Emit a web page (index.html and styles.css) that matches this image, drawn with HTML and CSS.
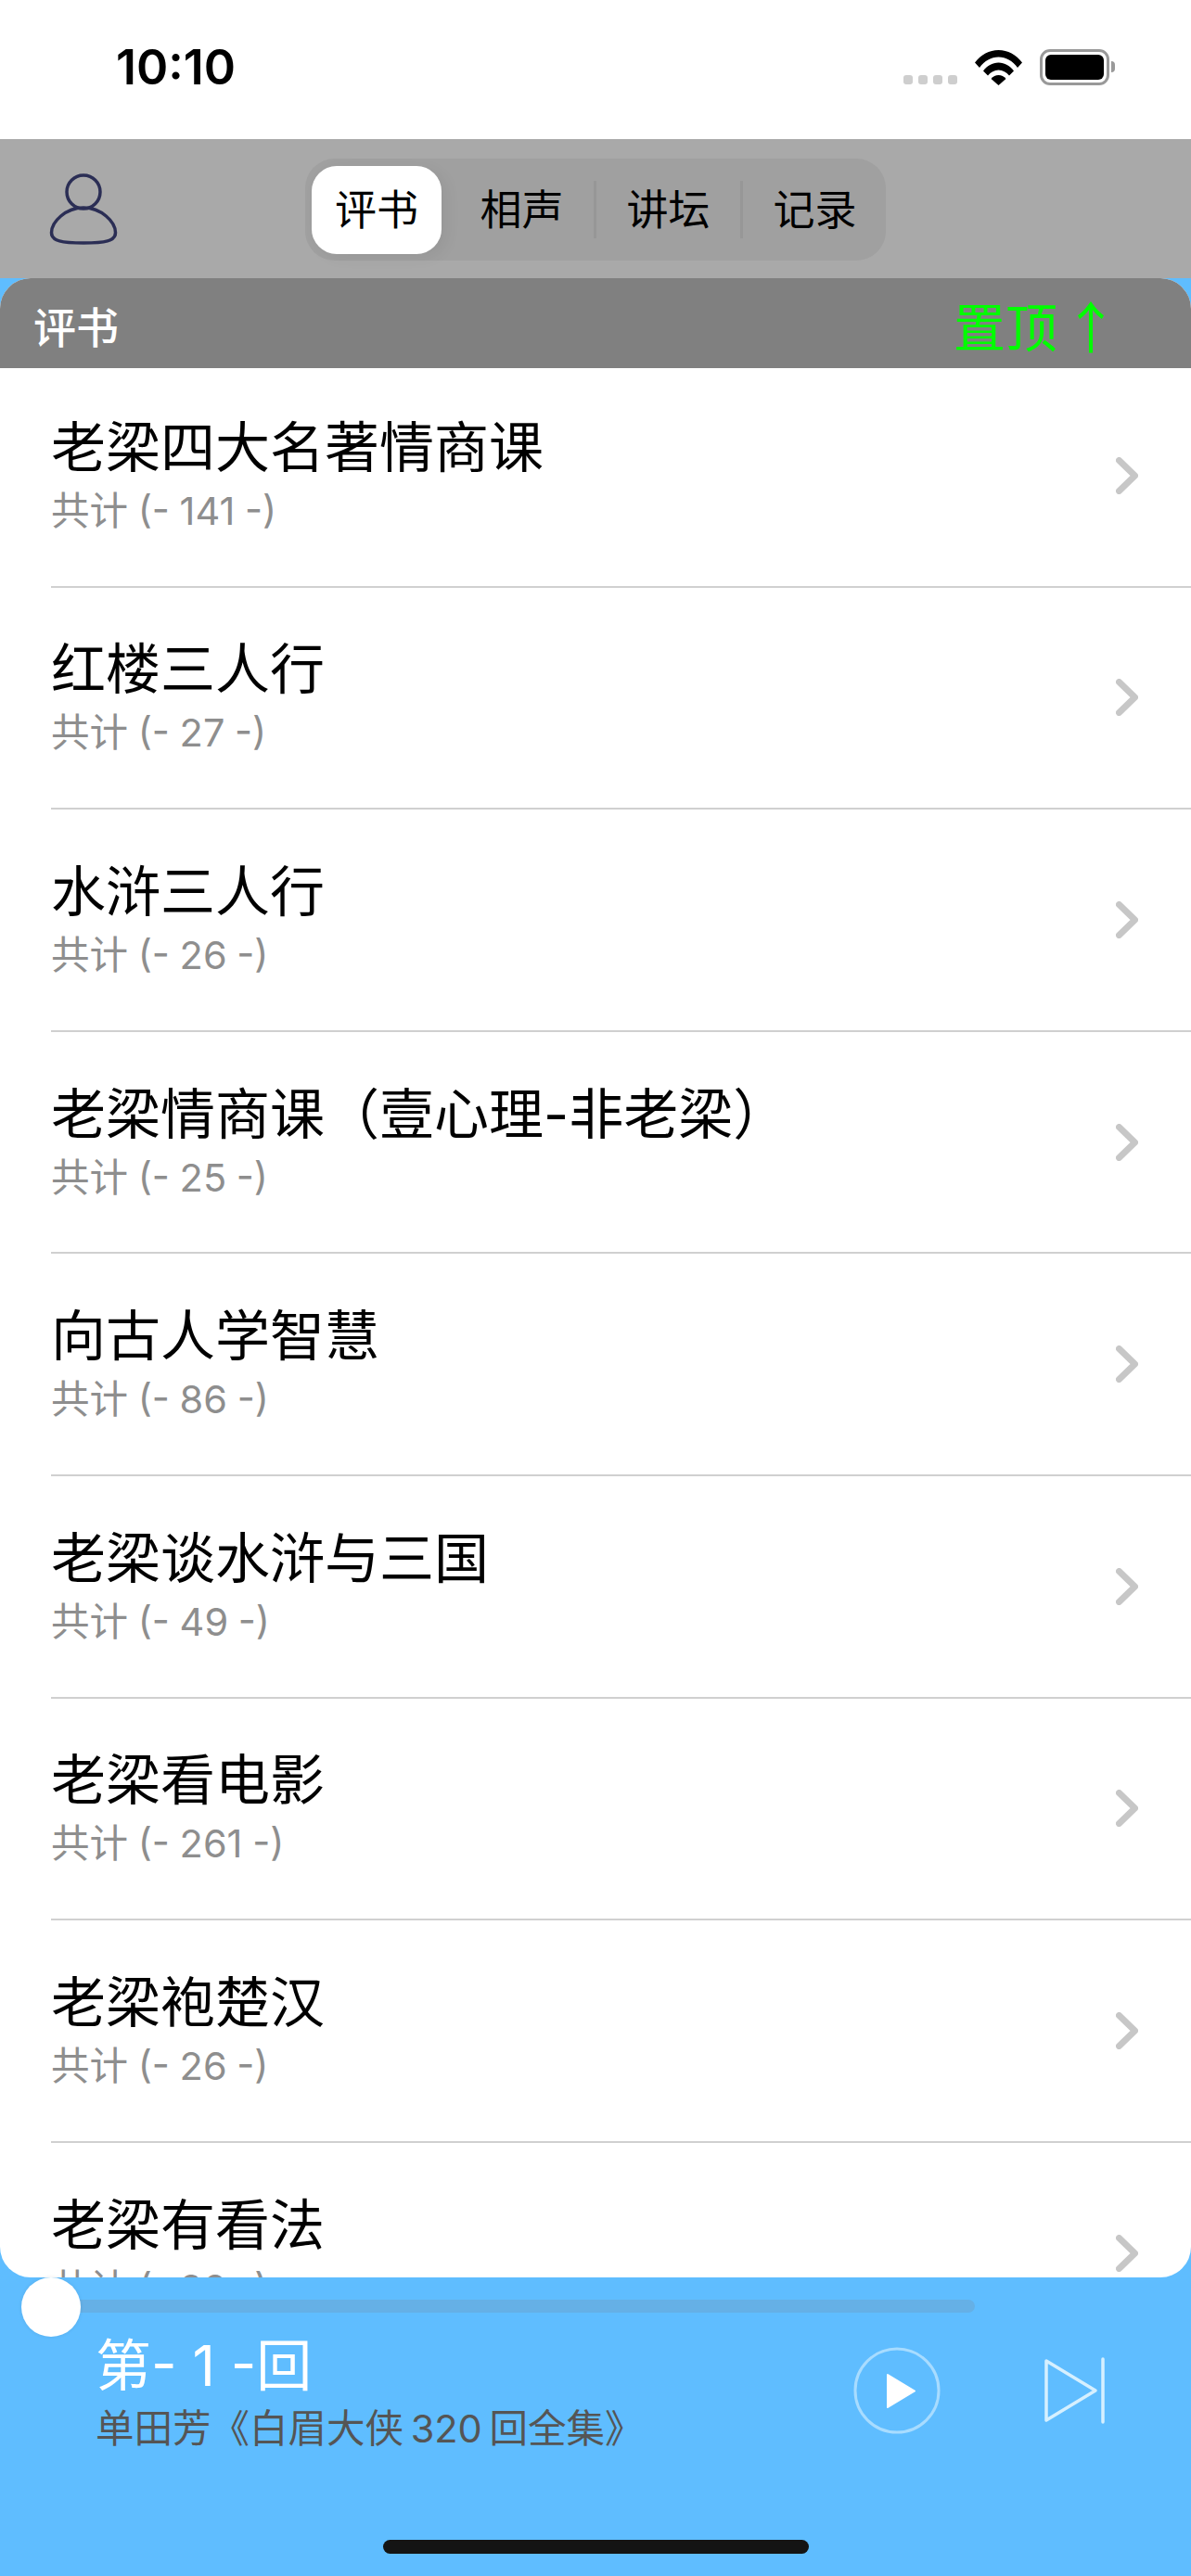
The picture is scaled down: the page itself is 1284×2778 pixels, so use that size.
FILE: index.html
```html
<!DOCTYPE html>
<html lang="zh">
<head>
    <meta charset="utf-8">
    <title>评书</title>
    <link rel="stylesheet" href="styles.css">
</head>
<body>
    <div class="app">
        <!-- Status bar -->
        <div class="status-bar">
            <span class="time">10:10</span>
            <div class="status-icons">
                <div class="signal"><i></i><i></i><i></i><i></i></div>
                <svg class="wifi" width="51" height="38" viewBox="0 0 51 38">
                    <path d="M0 13.5C6.500 5 15.500 0 25.500 0S44.500 5 51 13.500L46 19C40.500 11.500 33.500 7.500 25.500 7.500S10.500 11.500 5 19Z"/>
                    <path d="M9 22.500C13 17 19 13.500 25.500 13.500S38 17 42 22.500L37 27.500C34 24 30 21.500 25.500 21.500S17 24 14 27.500Z"/>
                    <path d="M17.500 31C19.500 28.500 22.500 27 25.500 27S31.500 28.500 33.500 31L25.500 38Z"/>
                </svg>
                <div class="battery"><div class="battery-level"></div></div>
                <div class="battery-nub"></div>
            </div>
        </div>

        <!-- Top nav -->
        <div class="nav">
            <svg class="user-icon" width="76" height="78" viewBox="0 0 76 78" fill="none" stroke="#2b2e55" stroke-width="3.5">
                <circle cx="38" cy="20" r="18"/>
                <path d="M38 37C19 37 3.500 52 3.500 64C3.500 73 15 75 38 75S72.500 73 72.500 64C72.500 52 57 37 38 37Z"/>
            </svg>
            <div class="segments">
                <div class="segment active">评书</div>
                <div class="segment">相声</div>
                <div class="segment-line"></div>
                <div class="segment">讲坛</div>
                <div class="segment-line"></div>
                <div class="segment">记录</div>
            </div>
        </div>

        <!-- List -->
        <div class="main">
            <div class="panel">
                <div class="section-head">
                    <span class="section-title">评书</span>
                    <span class="to-top">置顶<b class="to-top-arrow">↑</b></span>
                </div>
                <div class="list">
                    <div class="row">
                        <div class="row-text"><div class="row-title">老梁四大名著情商课</div><div class="row-sub">共计 (- 141 -)</div></div>
                        <svg class="chevron" width="24" height="40" viewBox="0 0 24 40"><path d="M3.500 3.500L20.500 20L3.500 36.500"/></svg>
                    </div>
                    <div class="row">
                        <div class="row-text"><div class="row-title">红楼三人行</div><div class="row-sub">共计 (- 27 -)</div></div>
                        <svg class="chevron" width="24" height="40" viewBox="0 0 24 40"><path d="M3.500 3.500L20.500 20L3.500 36.500"/></svg>
                    </div>
                    <div class="row">
                        <div class="row-text"><div class="row-title">水浒三人行</div><div class="row-sub">共计 (- 26 -)</div></div>
                        <svg class="chevron" width="24" height="40" viewBox="0 0 24 40"><path d="M3.500 3.500L20.500 20L3.500 36.500"/></svg>
                    </div>
                    <div class="row">
                        <div class="row-text"><div class="row-title">老梁情商课（壹心理-非老梁）</div><div class="row-sub">共计 (- 25 -)</div></div>
                        <svg class="chevron" width="24" height="40" viewBox="0 0 24 40"><path d="M3.500 3.500L20.500 20L3.500 36.500"/></svg>
                    </div>
                    <div class="row">
                        <div class="row-text"><div class="row-title">向古人学智慧</div><div class="row-sub">共计 (- 86 -)</div></div>
                        <svg class="chevron" width="24" height="40" viewBox="0 0 24 40"><path d="M3.500 3.500L20.500 20L3.500 36.500"/></svg>
                    </div>
                    <div class="row">
                        <div class="row-text"><div class="row-title">老梁谈水浒与三国</div><div class="row-sub">共计 (- 49 -)</div></div>
                        <svg class="chevron" width="24" height="40" viewBox="0 0 24 40"><path d="M3.500 3.500L20.500 20L3.500 36.500"/></svg>
                    </div>
                    <div class="row">
                        <div class="row-text"><div class="row-title">老梁看电影</div><div class="row-sub">共计 (- 261 -)</div></div>
                        <svg class="chevron" width="24" height="40" viewBox="0 0 24 40"><path d="M3.500 3.500L20.500 20L3.500 36.500"/></svg>
                    </div>
                    <div class="row">
                        <div class="row-text"><div class="row-title">老梁袍楚汉</div><div class="row-sub">共计 (- 26 -)</div></div>
                        <svg class="chevron" width="24" height="40" viewBox="0 0 24 40"><path d="M3.500 3.500L20.500 20L3.500 36.500"/></svg>
                    </div>
                    <div class="row">
                        <div class="row-text"><div class="row-title">老梁有看法</div><div class="row-sub">共计 (- 92 -)</div></div>
                        <svg class="chevron" width="24" height="40" viewBox="0 0 24 40"><path d="M3.500 3.500L20.500 20L3.500 36.500"/></svg>
                    </div>
                </div>
            </div>
        </div>

        <!-- Player -->
        <div class="player">
            <div class="slider">
                <div class="slider-thumb"></div>
            </div>
            <div class="player-body">
                <div class="player-text">
                    <div class="player-title">第- 1 -回</div>
                    <div class="player-sub">单田芳《白眉大侠 320 回全集》</div>
                </div>
                <svg class="play" width="94" height="94" viewBox="0 0 94 94">
                    <circle cx="47" cy="47" r="45" fill="none" stroke="#a8dcff" stroke-width="3"/>
                    <path d="M37 30L66 47.500L37 65Z" fill="#fff" stroke="#fff" stroke-width="2" stroke-linejoin="round"/>
                </svg>
                <svg class="next" width="66" height="72" viewBox="0 0 66 72" fill="none" stroke="#d6f0ff" stroke-width="3.500" stroke-linejoin="round" stroke-linecap="round">
                    <path d="M2 4L55 36L2 68Z"/>
                    <path d="M63 2V70"/>
                </svg>
            </div>
            <div class="home-bar"></div>
        </div>
    </div>
</body>
</html>
```

FILE: styles.css
```css
* {
    box-sizing: border-box;
    margin: 0;
    padding: 0;
}

body {
    font-family: Inter, "Noto Sans CJK SC", sans-serif;
    background: #5fbdff;
}

.app {
    width: 1284px;
    height: 2778px;
    display: flex;
    flex-direction: column;
    overflow: hidden;
}

/* Status bar */
.status-bar {
    height: 150px;
    flex: none;
    background: #fff;
    display: flex;
    justify-content: space-between;
    padding: 43px 82px 0 125px;
}

.time {
    font-size: 52px;
    font-weight: 600;
    line-height: 60px;
    color: #000;
}

.status-icons {
    display: flex;
    align-items: flex-start;
    padding-top: 10px;
}

.signal {
    display: flex;
    gap: 6px;
    margin-top: 28px;
    margin-right: 19px;
}

.signal i {
    display: block;
    width: 10px;
    height: 10px;
    border-radius: 3px;
    background: #cecece;
}

.wifi {
    margin-top: 1px;
    margin-right: 19px;
    fill: #000;
}

.battery {
    width: 75px;
    height: 39px;
    border: 3px solid #999;
    border-radius: 11px;
    padding: 3px;
}

.battery-level {
    height: 100%;
    background: #000;
    border-radius: 6px;
}

.battery-nub {
    width: 4px;
    height: 12px;
    margin: 13px 0 0 2px;
    background: #999;
    border-radius: 0 6px 6px 0;
}

/* Nav */
.nav {
    height: 150px;
    flex: none;
    background: #a9a9a9;
    position: relative;
    display: flex;
    align-items: flex-start;
    padding: 21px 0 0 329px;
}

.user-icon {
    position: absolute;
    left: 52px;
    top: 37px;
}

.segments {
    width: 626px;
    height: 110px;
    background: #a0a0a0;
    border-radius: 32px;
    display: flex;
    align-items: center;
    padding-left: 7px;
}

.segment {
    width: 155px;
    flex: none;
    text-align: center;
    font-size: 45px;
    line-height: 95px;
    color: #000;
}

.segment.active {
    width: 140px;
    margin-right: 9px;
    background: #fff;
    border-radius: 27px;
    box-shadow: 6px 4px 16px rgba(0,0,0,0.06);
}

.segment-line {
    width: 3px;
    height: 62px;
    flex: none;
    background: #979797;
}

/* List */
.main {
    flex: 1;
    min-height: 0;
    display: flex;
}

.panel {
    width: 100%;
    background: #fff;
    border-radius: 33px;
    overflow: hidden;
}

.section-head {
    height: 97px;
    background: #808080;
    position: relative;
    display: flex;
    justify-content: space-between;
    align-items: center;
    padding: 2px 88px 0 36px;
}

.section-title {
    font-size: 46px;
    font-weight: 500;
    color: #fff;
}

.to-top {
    font-size: 56px;
    color: #00ff00;
    display: flex;
    align-items: center;
    gap: 6px;
}

.to-top-arrow {
    font-family: "Noto Sans CJK SC", sans-serif;
    font-weight: 400;
    font-size: 60px;
    width: 50px;
    text-align: center;
}

.list {
    margin-top: -3px;
}

.row {
    height: 239.6px;
    margin-left: 55px;
    border-bottom: 2px solid #d0d0d0;
    display: flex;
    justify-content: space-between;
    align-items: center;
    padding-right: 57px;
}

.row-text {
    padding-bottom: 4px;
}

.row-title {
    font-size: 59px;
    line-height: 74px;
    margin-bottom: 6px;
    color: #000;
}

.row-sub {
    font-size: 41.5px;
    line-height: 50px;
    word-spacing: -1px;
    color: #8e8e8e;
}

.chevron {
    fill: none;
    stroke: #c7c7c7;
    stroke-width: 7;
    stroke-linecap: round;
    stroke-linejoin: round;
}

/* Player */
.player {
    height: 322px;
    flex: none;
    position: relative;
    padding-top: 24px;
}

.slider {
    margin-left: 55px;
    width: 996px;
    height: 14px;
    background: #65b0e6;
    border-radius: 7px;
    position: relative;
}

.slider-thumb {
    position: absolute;
    left: -32px;
    top: -24px;
    width: 64px;
    height: 64px;
    border-radius: 50%;
    background: #fff;
    box-shadow: 0 0 4px rgba(0,0,0,0.08);
}

.player-body {
    display: flex;
    align-items: center;
    padding: 20px 92px 0 103px;
}

.player-text {
    flex: 1;
}

.player-title {
    font-size: 60px;
    line-height: 74px;
    margin-bottom: 6px;
    color: #fff;
}

.player-sub {
    font-size: 41.5px;
    line-height: 50px;
    word-spacing: -4px;
    color: #555;
}

.play {
    margin-right: 112px;
    margin-bottom: 2px;
}

.next {
    margin-bottom: 2px;
}

.home-bar {
    position: absolute;
    left: 413px;
    bottom: 24px;
    width: 459px;
    height: 15px;
    border-radius: 8px;
    background: #141414;
}
```
